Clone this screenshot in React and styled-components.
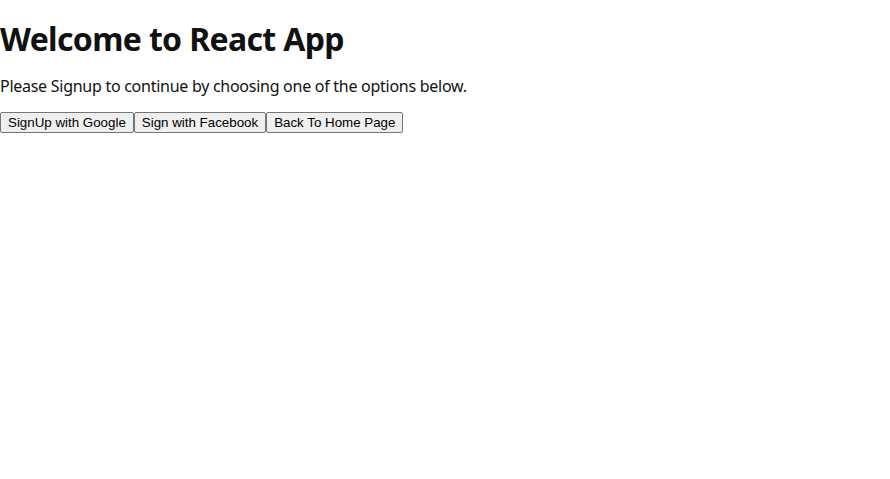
import React from "react";
import styled, { createGlobalStyle } from "styled-components";

const GlobalStyle = createGlobalStyle`
  body {
    margin: 0;
    background: #fff;
    color: #111;
    font-family: "Noto Sans", "Open Sans", sans-serif;
    line-height: 1.12;
  }
`;

const Container = styled.div``;

const Title = styled.h1`
  font-size: 32px;
  font-weight: 700;
  letter-spacing: -0.65px;
  margin: 20.5px 0 21.44px;
`;

const Text = styled.p`
  font-size: 16px;
  letter-spacing: -0.27px;
  margin: 16px 0;
`;

const ButtonRow = styled.div`
  display: flex;
`;

const Button = styled.button`
  font-family: "Liberation Sans", Arial, sans-serif;
  font-size: 13.33px;
  color: #000;
  background: #efefef;
  border: 1px solid #767676;
  border-radius: 2px;
  padding: 1px 7px;
  height: 21px;
`;

const App = () => {
  return (
    <Container>
      <GlobalStyle />
      <Title>Welcome to React App</Title>
      <Text>Please Signup to continue by choosing one of the options below.</Text>
      <ButtonRow>
        <Button>SignUp with Google</Button>
        <Button>Sign with Facebook</Button>
        <Button>Back To Home Page</Button>
      </ButtonRow>
    </Container>
  );
};

export default App;
